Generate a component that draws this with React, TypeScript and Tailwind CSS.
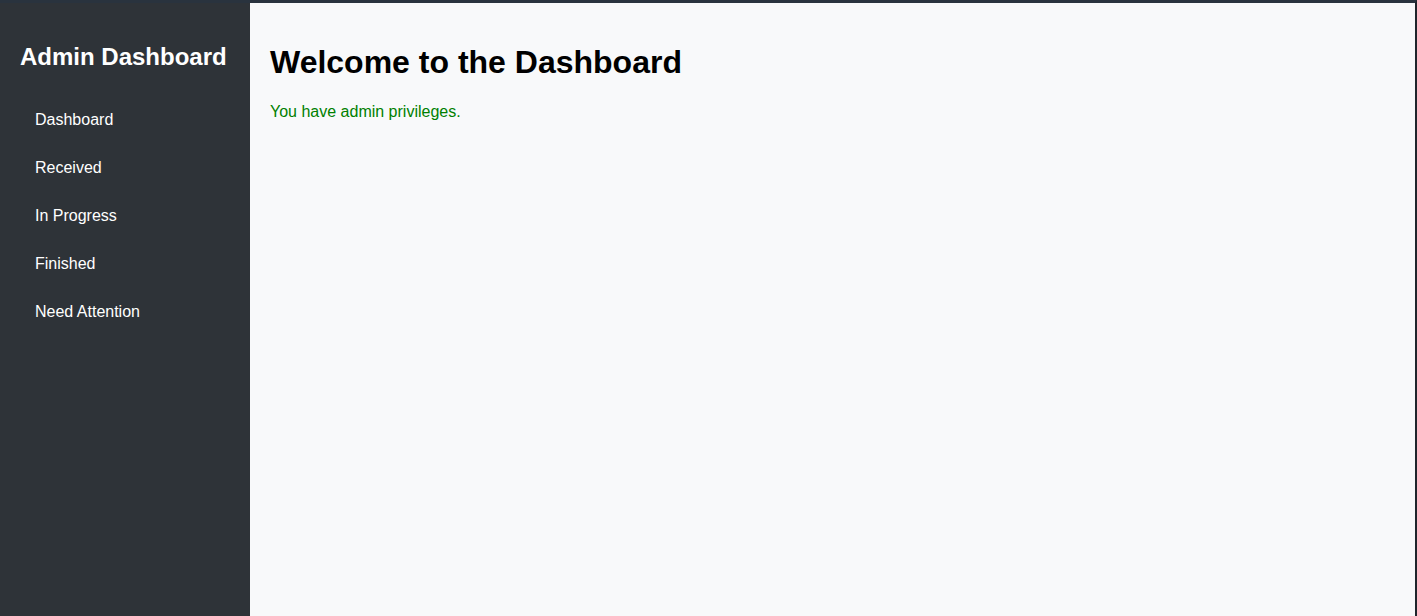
import React from "react";

export default function App() {
  const items = ["Dashboard", "Received", "In Progress", "Finished", "Need Attention"];
  return (
    <div
      className="flex h-[616px] w-full flex-col overflow-hidden border-t-[3px] border-r-2 border-t-[#29333e] border-r-[#1f252b] bg-[#f8f9fa]"
      style={{ fontFamily: '"Liberation Sans", Arial, sans-serif' }}
    >
      <div className="flex flex-1">
        <aside className="w-[250px] shrink-0 bg-[#2e3338] px-5 pt-5 text-white">
          <h2 className="mt-[20px] text-[24px] font-bold leading-[28px]">Admin Dashboard</h2>
          <ul className="mt-[25px]">
            {items.map((it) => (
              <li key={it} className="px-[15px] py-[12px] text-[16px] leading-[24px]">
                {it}
              </li>
            ))}
          </ul>
        </aside>
        <main className="flex-1 p-5">
          <h1 className="mt-[21px] text-[32px] font-bold leading-[37px] text-black">
            Welcome to the Dashboard
          </h1>
          <p className="mt-[22px] text-[16px] leading-[18px] text-[#008000]">You have admin privileges.</p>
        </main>
      </div>
    </div>
  );
}
